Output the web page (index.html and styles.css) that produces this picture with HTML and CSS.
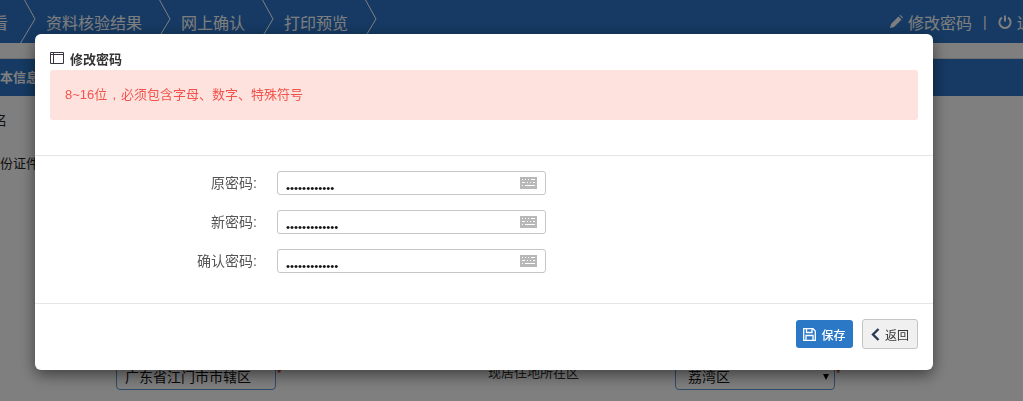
FILE: index.html
```html
<!DOCTYPE html>
<html lang="zh-CN">
<head>
    <meta charset="UTF-8">
    <meta name="viewport" content="width=device-width, initial-scale=1.0">
    <title>修改密码</title>
    <link rel="stylesheet" href="styles.css">
</head>
<body>
    <div class="topbar">
        <div class="steps">
            <span class="step step-first">查看</span>
            <svg class="step-arrow" width="16" height="43" viewBox="0 0 16 43"><path d="M3 -1 L14 19 L-1 44"/></svg>
            <span class="step">资料核验结果</span>
            <svg class="step-arrow" width="16" height="43" viewBox="0 0 16 43"><path d="M3 -1 L14 19 L-1 44"/></svg>
            <span class="step">网上确认</span>
            <svg class="step-arrow" width="16" height="43" viewBox="0 0 16 43"><path d="M3 -1 L14 19 L-1 44"/></svg>
            <span class="step">打印预览</span>
            <svg class="step-arrow" width="16" height="43" viewBox="0 0 16 43"><path d="M3 -1 L14 19 L-1 44"/></svg>
        </div>
        <div class="user-links">
            <svg class="top-icon" width="13" height="13" viewBox="0 0 13 13"><path d="M0 13 L1 9 L8.5 1.5 L11.5 4.5 L4 12 Z M9.5 .5 L10.5 0 L13 2.5 L12.5 3.5 Z"/></svg>
            <span>修改密码</span>
            <span class="sep">|</span>
            <svg class="power" width="14" height="14" viewBox="0 0 14 14"><path d="M4 2.6 A5.6 5.6 0 1 0 10 2.6 M7 .5 V6.5"/></svg>
            <span>退出</span>
        </div>
    </div>
    <div class="grey-strip"></div>
    <div class="section-title"><span>基本信息</span></div>
    <div class="page-row name-row">姓名</div>
    <div class="page-row id-row">身份证件</div>
    <div class="address-row">
        <div class="fake-field">广东省江门市市辖区</div>
        <span class="req">*</span>
        <span class="address-label">现居住地所在区</span>
        <div class="fake-field fake-select">荔湾区<span class="caret"></span></div>
        <span class="req">*</span>
    </div>

    <div class="overlay">
        <div class="dialog">
            <div class="dialog-head">
                <div class="dialog-title">
                    <svg width="14" height="12" viewBox="0 0 14 12"><path d="M.5 .5 H13.5 V11.5 H.5 Z M3.5 .5 V11.5 M.5 2.5 H13.5"/></svg>
                    修改密码
                </div>
                <div class="alert">8~16位 , 必须包含字母、数字、特殊符号</div>
            </div>
            <div class="dialog-body">
                <div class="form-row">
                    <label>原密码:</label>
                    <div class="pwd-box">
                        <input type="password" value="123456789012">
                        <svg class="kbd" width="17" height="12" viewBox="0 0 17 12"><path d="M0 0 H17 V12 H0 Z M2 2 H3 V3 H2 Z M5 2 H6 V3 H5 Z M8 2 H9 V3 H8 Z M11 2 H15 V3 H11 Z M2 5 H5 V6 H2 Z M7 5 H8 V6 H7 Z M10 5 H11 V6 H10 Z M13 5 H15 V6 H13 Z M2 8 H3 V9 H2 Z M5 8 H15 V9 H5 Z" fill-rule="evenodd"/></svg>
                    </div>
                </div>
                <div class="form-row">
                    <label>新密码:</label>
                    <div class="pwd-box">
                        <input type="password" value="1234567890123">
                        <svg class="kbd" width="17" height="12" viewBox="0 0 17 12"><path d="M0 0 H17 V12 H0 Z M2 2 H3 V3 H2 Z M5 2 H6 V3 H5 Z M8 2 H9 V3 H8 Z M11 2 H15 V3 H11 Z M2 5 H5 V6 H2 Z M7 5 H8 V6 H7 Z M10 5 H11 V6 H10 Z M13 5 H15 V6 H13 Z M2 8 H3 V9 H2 Z M5 8 H15 V9 H5 Z" fill-rule="evenodd"/></svg>
                    </div>
                </div>
                <div class="form-row">
                    <label>确认密码:</label>
                    <div class="pwd-box">
                        <input type="password" value="1234567890123">
                        <svg class="kbd" width="17" height="12" viewBox="0 0 17 12"><path d="M0 0 H17 V12 H0 Z M2 2 H3 V3 H2 Z M5 2 H6 V3 H5 Z M8 2 H9 V3 H8 Z M11 2 H15 V3 H11 Z M2 5 H5 V6 H2 Z M7 5 H8 V6 H7 Z M10 5 H11 V6 H10 Z M13 5 H15 V6 H13 Z M2 8 H3 V9 H2 Z M5 8 H15 V9 H5 Z" fill-rule="evenodd"/></svg>
                    </div>
                </div>
            </div>
            <div class="dialog-foot">
                <button class="btn btn-save">
                    <svg width="13" height="13" viewBox="0 0 13 13"><path d="M.7 .7 H10 L12.3 3 V12.3 H.7 Z M3.5 .7 V4.5 H9 V.7 M3 12.3 V7.5 H10 V12.3"/></svg>
                    保存
                </button>
                <button class="btn btn-back">
                    <svg width="9" height="13" viewBox="0 0 9 13"><path d="M7.5 1 L2 6.5 L7.5 12"/></svg>
                    返回
                </button>
            </div>
        </div>
    </div>
</body>
</html>
```

FILE: styles.css
```css
html, body {
    margin: 0;
    height: 100%;
    overflow: hidden;
}

body {
    background-color: #fff;
    color: #222;
    font-family: "Liberation Sans", "Noto Sans CJK SC", sans-serif;
    font-size: 13px;
}

.topbar {
    display: flex;
    justify-content: space-between;
    height: 43px;
    background-color: #2c74c6;
    color: #fff;
    white-space: nowrap;
    overflow: hidden;
}

.steps {
    display: flex;
    align-items: center;
    margin-left: -24px;
}

.step {
    font-size: 16px;
}

.step-first {
    width: 32px;
}

.steps .step-arrow {
    margin: 0 9px 0 14px;
    flex: none;
    overflow: visible;
}

.step-arrow path {
    fill: none;
    stroke: #fff;
    stroke-width: 1;
}

.step-first + .step-arrow {
    margin-left: 13px;
}

.user-links {
    display: flex;
    align-items: center;
    gap: 5px;
    width: 133px;
    font-size: 16px;
}

.user-links span {
    flex: none;
}

.top-icon {
    flex: none;
    fill: #fff;
}

.user-links .sep {
    margin: 0 6px;
    font-size: 14px;
}

.power {
    flex: none;
    fill: none;
    stroke: #fff;
    stroke-width: 2;
}

.grey-strip {
    height: 16px;
    background-color: #fff;
    border-bottom: 1px solid #ddd;
    box-sizing: border-box;
}

.section-title {
    height: 37px;
    line-height: 37px;
    background-color: #2c74c6;
    color: #fff;
    font-weight: bold;
    margin-left: -13px;
}

.page-row {
    line-height: 20px;
}

.name-row {
    margin-top: 15px;
    margin-left: -19px;
}

.id-row {
    margin-top: 23px;
    margin-left: -13px;
}

.address-row {
    display: flex;
    align-items: flex-start;
    margin-top: 186px;
    padding-left: 116px;
}

.fake-field {
    box-sizing: border-box;
    width: 160px;
    height: 30px;
    padding: 6px 12px 0 8px;
    border: 1px solid #5b9bd5;
    border-radius: 4px;
    background-color: #fff;
    color: #111;
    font-size: 14px;
    line-height: 20px;
}

.fake-select {
    position: relative;
    padding-left: 12px;
}

.caret {
    position: absolute;
    top: 13px;
    right: 5px;
    border-top: 6px solid #000;
    border-left: 3.5px solid transparent;
    border-right: 3.5px solid transparent;
}

.req {
    width: 6px;
    margin-left: 1px;
    margin-top: 6px;
    color: #c00;
    font-size: 11px;
    line-height: 14px;
}

.address-label {
    width: 187px;
    margin-left: 205px;
    margin-top: 3px;
    font-size: 13px;
    line-height: 20px;
    color: #333;
}

.overlay {
    position: fixed;
    top: 0;
    right: 0;
    bottom: 0;
    left: 0;
    box-sizing: border-box;
    padding: 34px 90px 0 35px;
    background-color: rgba(0, 0, 0, 0.5);
}

.dialog {
    display: flex;
    flex-direction: column;
    height: 336px;
    background-color: #fff;
    border-radius: 6px;
    box-shadow: 0 5px 15px rgba(0, 0, 0, 0.5);
}

.dialog-head {
    box-sizing: border-box;
    height: 122px;
    padding: 14px 15px 0;
    border-bottom: 1px solid #e5e5e5;
}

.dialog-title {
    display: flex;
    align-items: center;
    gap: 6px;
    height: 20px;
    margin-bottom: 2px;
    color: #333;
    font-weight: bold;
    font-size: 13px;
}

.dialog-title svg {
    fill: none;
    stroke: #3a3340;
    stroke-width: 1;
}

.alert {
    height: 50px;
    line-height: 50px;
    padding-left: 15px;
    background-color: #fee2dd;
    border-radius: 3px;
    color: #f2534c;
    font-size: 13px;
    word-spacing: 1.5px;
}

.dialog-body {
    display: flex;
    flex-direction: column;
    gap: 15px;
    height: 148px;
    padding-top: 15px;
    box-sizing: border-box;
    border-bottom: 1px solid #e5e5e5;
}

.form-row {
    display: flex;
    align-items: center;
    gap: 20px;
}

.form-row label {
    width: 222px;
    margin-bottom: 3px;
    text-align: right;
    color: #555;
    font-size: 14px;
}

.pwd-box {
    position: relative;
    width: 269px;
    height: 24px;
}

.pwd-box input {
    box-sizing: border-box;
    width: 100%;
    height: 100%;
    padding: 10px 30px 0 8px;
    border: 1px solid #c6c6c6;
    border-radius: 3px;
    color: #111;
    font-family: "Liberation Sans", sans-serif;
    font-size: 11.5px;
    outline: none;
}

.kbd {
    position: absolute;
    top: 6px;
    right: 9px;
    fill: #b8b8b8;
}

.dialog-foot {
    display: flex;
    align-items: center;
    justify-content: flex-end;
    gap: 9px;
    flex: 1;
    padding: 0 15px 6px 0;
}

.btn {
    display: flex;
    align-items: center;
    justify-content: center;
    gap: 5px;
    box-sizing: border-box;
    padding: 0;
    border-radius: 3px;
    font-family: inherit;
    font-size: 12px;
}

.btn svg {
    fill: none;
    flex: none;
}

.btn-save {
    width: 57px;
    height: 28px;
    border: 0;
    background-color: #2a78c6;
    color: #fff;
    font-weight: 500;
}

.btn-save svg {
    stroke: #fff;
    stroke-width: 1.3;
}

.btn-back {
    width: 56px;
    height: 30px;
    border: 1px solid #c4c4c4;
    background-color: #f0f0f0;
    color: #333;
}

.btn-back svg {
    stroke: #2a3a55;
    stroke-width: 2.4;
}
```
